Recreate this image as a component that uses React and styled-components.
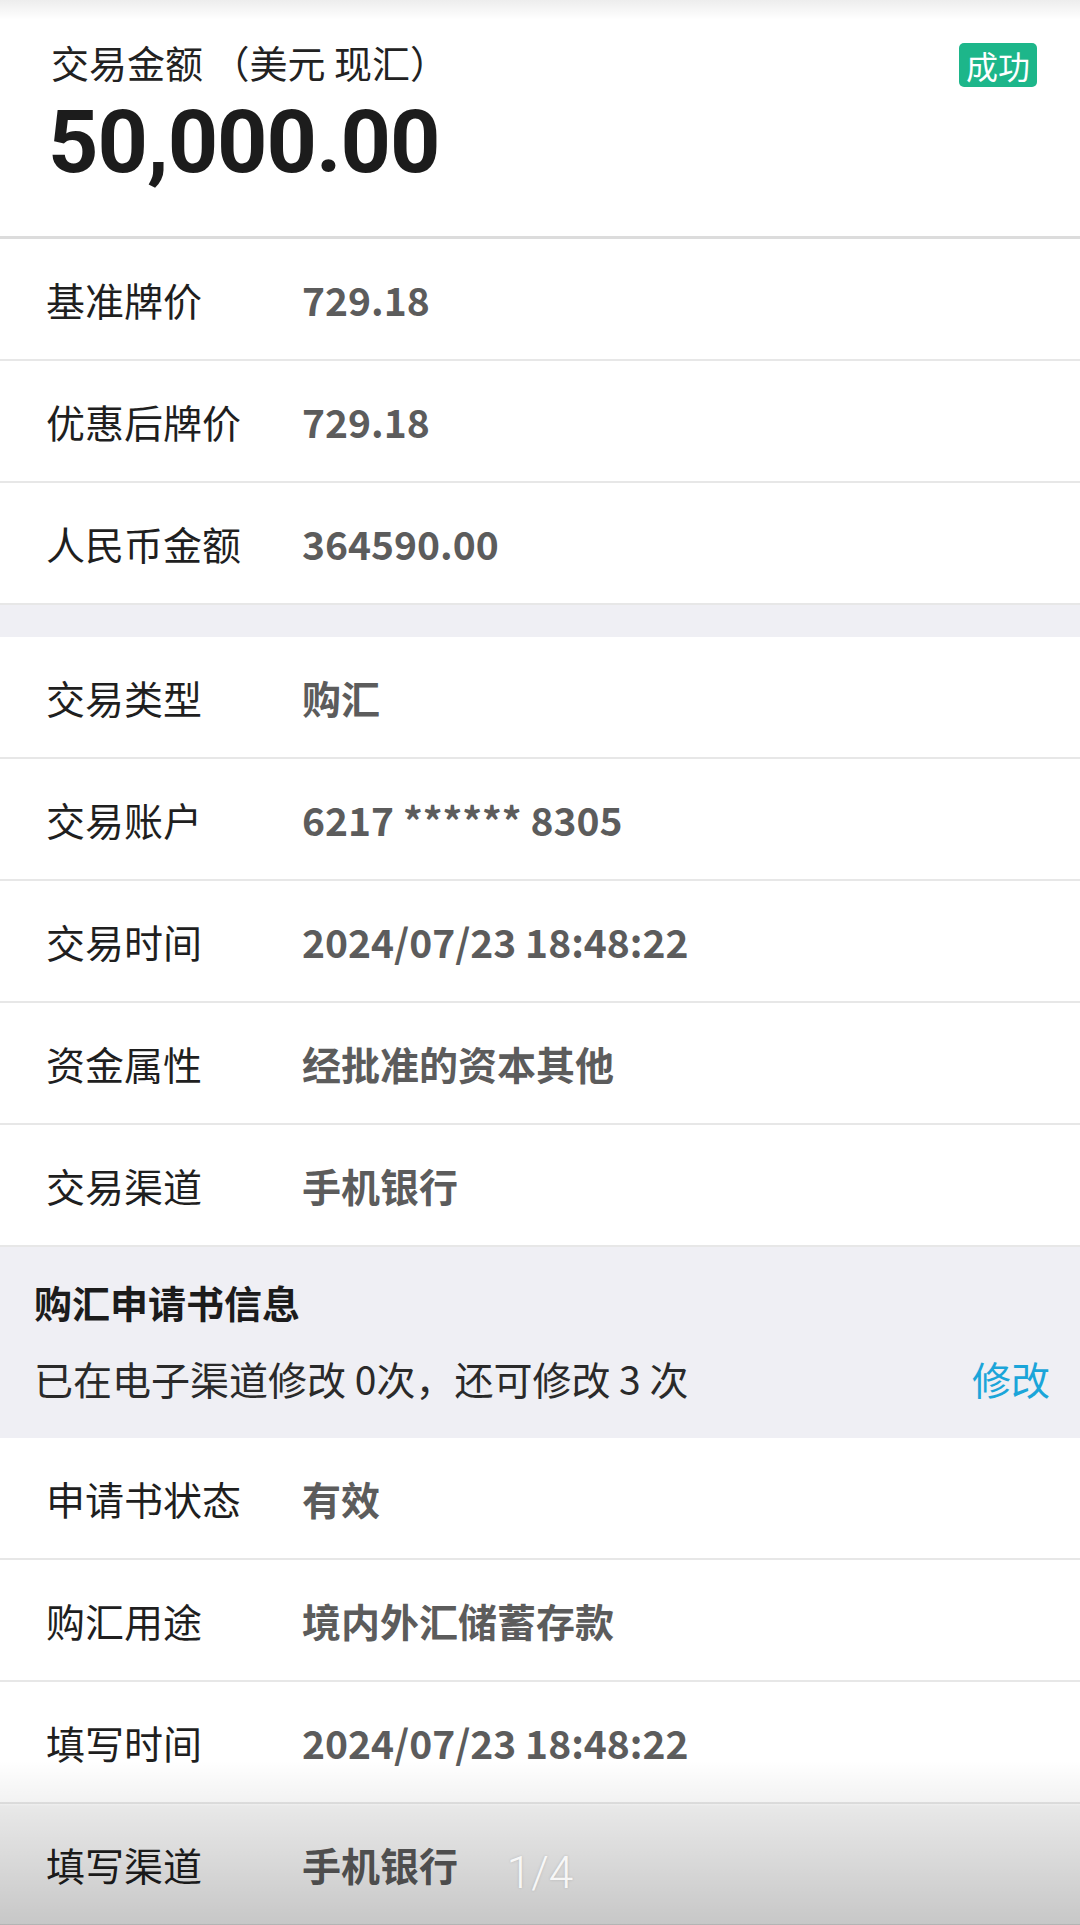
import React from "react";
import styled, { createGlobalStyle } from "styled-components";

const GlobalStyle = createGlobalStyle`
  html, body {
    margin: 0;
    padding: 0;
    background: #ffffff;
  }
  * {
    box-sizing: border-box;
  }
  body {
    font-family: "Noto Sans CJK SC", "Noto Sans", sans-serif;
  }
`;

const SUMMARY_ROWS = [
  { label: "基准牌价", value: "729.18" },
  { label: "优惠后牌价", value: "729.18" },
  { label: "人民币金额", value: "364590.00" },
];

const DETAIL_ROWS = [
  { label: "交易类型", value: "购汇" },
  { label: "交易账户", value: "6217 ****** 8305" },
  { label: "交易时间", value: "2024/07/23 18:48:22" },
  { label: "资金属性", value: "经批准的资本其他" },
  { label: "交易渠道", value: "手机银行" },
];

const APPLICATION_ROWS = [
  { label: "申请书状态", value: "有效" },
  { label: "购汇用途", value: "境内外汇储蓄存款" },
  { label: "填写时间", value: "2024/07/23 18:48:22" },
  { label: "填写渠道", value: "手机银行" },
];

function InfoRow({ label, value }) {
  return (
    <Row>
      <RowLabel>{label}</RowLabel>
      <RowValue>{value}</RowValue>
    </Row>
  );
}

export default function App() {
  return (
    <>
      <GlobalStyle />
      <Page>
        <TopShade />
        <Header>
          <AmountBlock>
            <AmountLabel>交易金额 （美元 现汇）</AmountLabel>
            <Amount>50,000.00</Amount>
          </AmountBlock>
          <StatusBadge>成功</StatusBadge>
        </Header>

        <Section>
          {SUMMARY_ROWS.map((row) => (
            <InfoRow key={row.label} {...row} />
          ))}
        </Section>

        <Spacer />

        <Section>
          {DETAIL_ROWS.map((row) => (
            <InfoRow key={row.label} {...row} />
          ))}
        </Section>

        <ApplyPanel>
          <ApplyTitle>购汇申请书信息</ApplyTitle>
          <ApplyLine>
            <ApplyNote>已在电子渠道修改 0次，还可修改 3 次</ApplyNote>
            <EditLink>修改</EditLink>
          </ApplyLine>
        </ApplyPanel>

        <Section>
          {APPLICATION_ROWS.map((row) => (
            <InfoRow key={row.label} {...row} />
          ))}
        </Section>

        <BottomShade />
        <PageIndicator>1/4</PageIndicator>
      </Page>
    </>
  );
}

const Page = styled.div`
  position: relative;
  width: 1080px;
  height: 1925px;
  overflow: hidden;
  background: #ffffff;
`;

const TopShade = styled.div`
  position: absolute;
  top: 0;
  left: 0;
  right: 0;
  height: 20px;
  background: linear-gradient(rgba(0, 0, 0, 0.07), rgba(0, 0, 0, 0));
  pointer-events: none;
`;

const Header = styled.header`
  height: 239px;
  display: flex;
  justify-content: space-between;
  align-items: flex-start;
  padding: 38px 43px 0 51px;
  border-bottom: 3px solid #dcdcdc;
`;

const AmountBlock = styled.div`
  display: flex;
  flex-direction: column;
`;

const AmountLabel = styled.div`
  font-size: 38px;
  line-height: 48px;
  color: #222222;
  white-space: pre;
`;

const Amount = styled.div`
  margin: 3px 0 0 -3px;
  font-family: "Roboto", "Noto Sans", sans-serif;
  font-size: 88px;
  line-height: 106px;
  font-weight: 700;
  letter-spacing: -1px;
  color: #1c1c1c;
`;

const StatusBadge = styled.span`
  margin-top: 5px;
  height: 44px;
  padding: 0 7px;
  border-radius: 5px;
  background: #1db68a;
  color: #ffffff;
  font-size: 32px;
  line-height: 44px;
`;

const Section = styled.section`
  display: flex;
  flex-direction: column;
  background: #ffffff;
`;

const Row = styled.div`
  height: 122px;
  display: flex;
  align-items: center;
  padding-left: 46px;
  border-bottom: 2px solid #e7e7e7;
`;

const RowLabel = styled.div`
  width: 256px;
  flex-shrink: 0;
  font-size: 39px;
  color: #1f1f1f;
`;

const RowValue = styled.div`
  font-size: 39px;
  font-weight: 700;
  color: #5c5c5c;
`;

const Spacer = styled.div`
  height: 32px;
  background: #efeff4;
`;

const ApplyPanel = styled.div`
  height: 191px;
  display: flex;
  flex-direction: column;
  padding: 31px 30px 0 34px;
  background: #efeff4;
`;

const ApplyTitle = styled.div`
  font-size: 38px;
  line-height: 48px;
  font-weight: 700;
  color: #1c1c1c;
`;

const ApplyLine = styled.div`
  margin-top: 28px;
  display: flex;
  justify-content: space-between;
  align-items: center;
`;

const ApplyNote = styled.div`
  font-size: 39px;
  line-height: 48px;
  color: #2a2a2a;
`;

const EditLink = styled.span`
  font-size: 39px;
  line-height: 48px;
  color: #1ba5d9;
`;

const BottomShade = styled.div`
  position: absolute;
  left: 0;
  right: 0;
  bottom: 0;
  height: 165px;
  background: linear-gradient(
    rgba(0, 0, 0, 0) 0%,
    rgba(0, 0, 0, 0.05) 26%,
    rgba(0, 0, 0, 0.09) 28%,
    rgba(0, 0, 0, 0.22) 100%
  );
  pointer-events: none;
`;

const PageIndicator = styled.div`
  position: absolute;
  left: 0;
  right: 0;
  bottom: 28px;
  text-align: center;
  font-family: "Roboto", "Noto Sans", sans-serif;
  font-weight: 300;
  font-size: 44px;
  line-height: 48px;
  color: rgba(255, 255, 255, 0.9);
  text-shadow: 0 0 3px rgba(0, 0, 0, 0.15);
`;
